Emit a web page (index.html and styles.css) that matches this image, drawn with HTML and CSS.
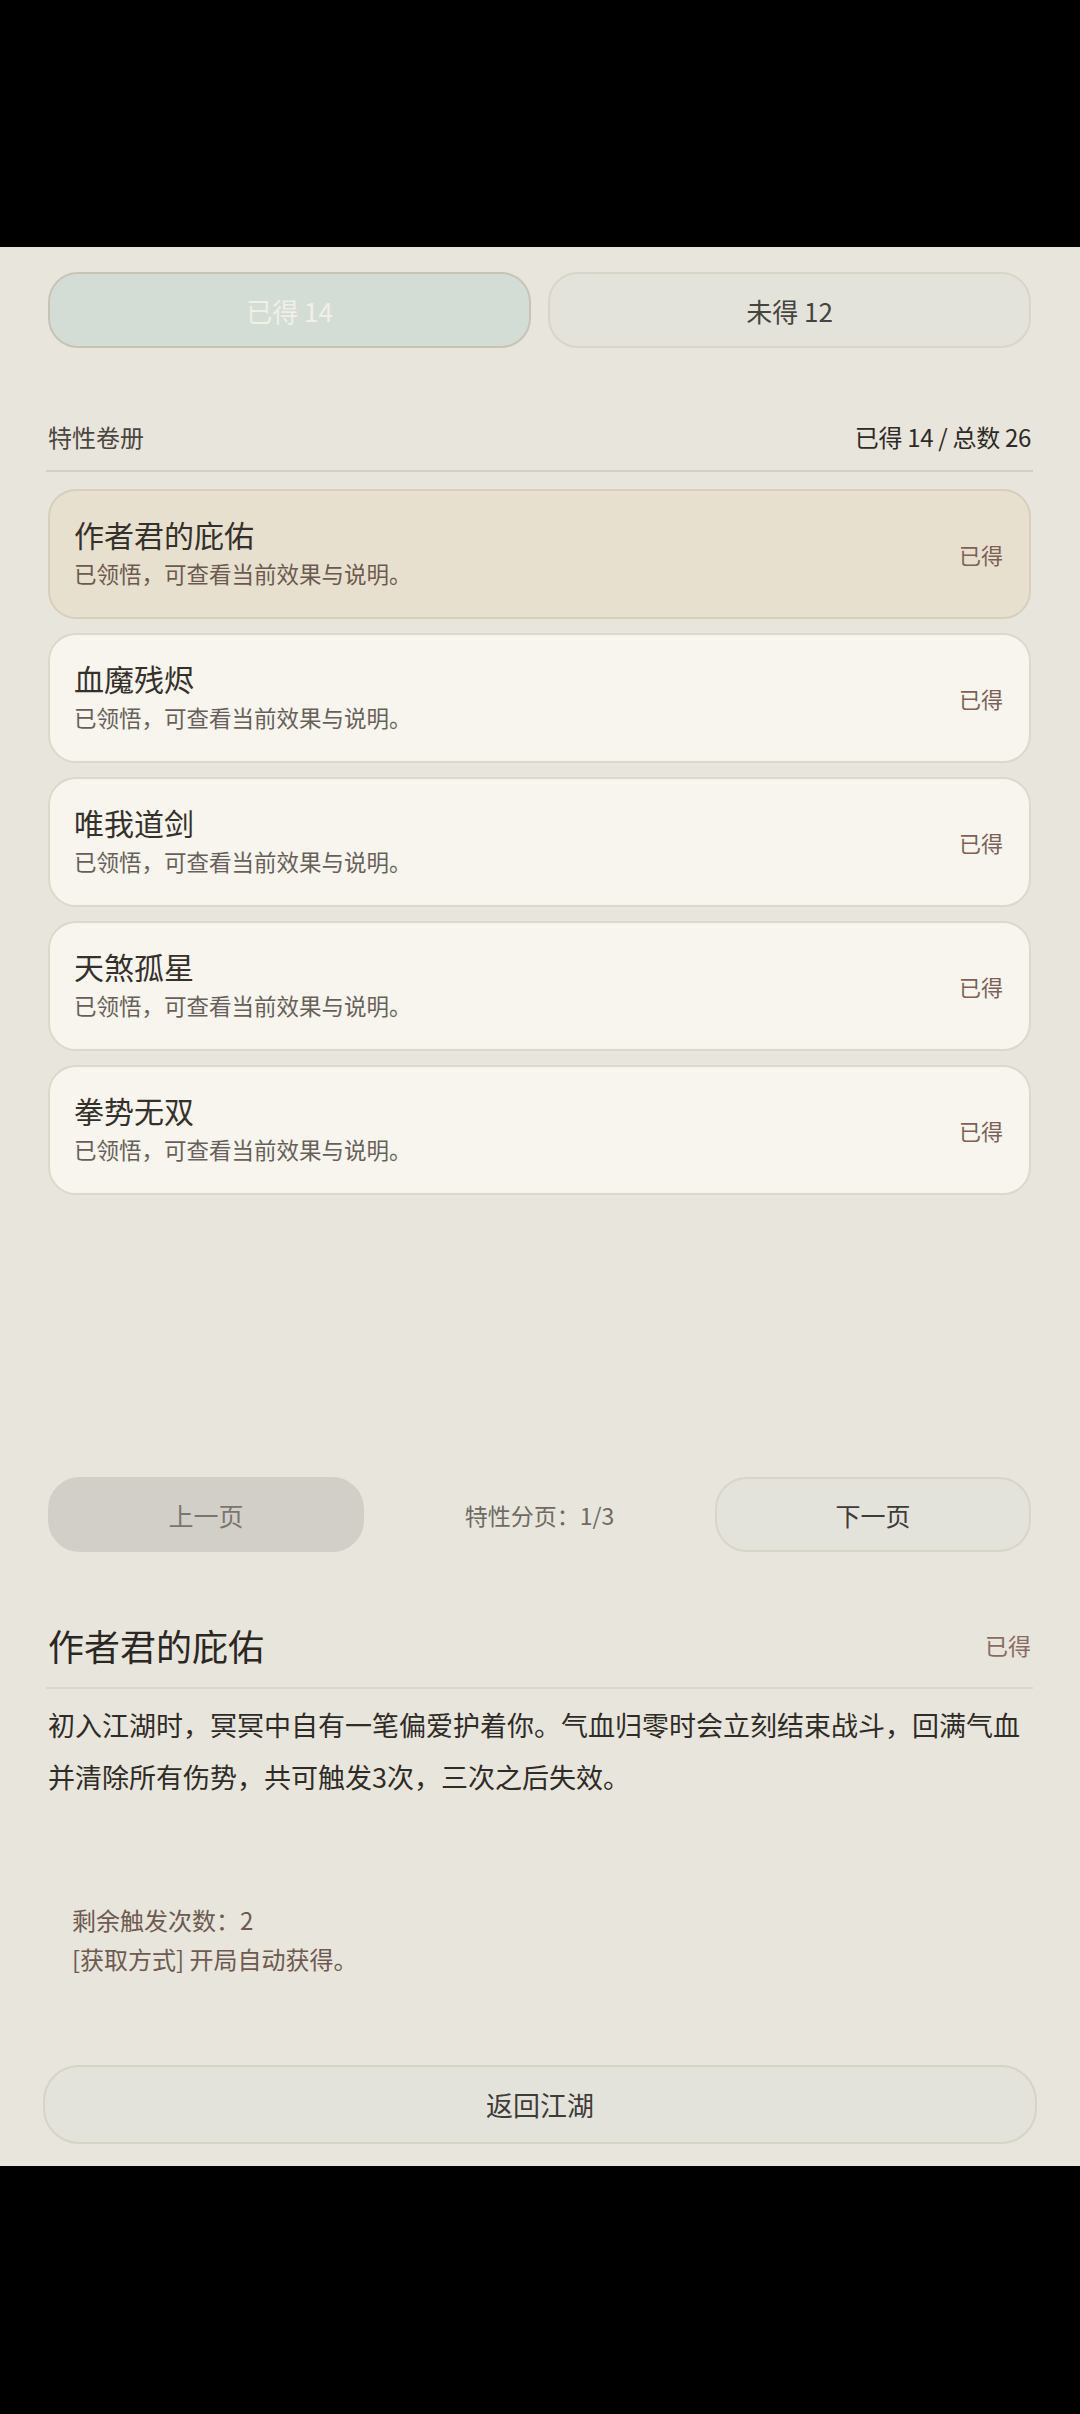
FILE: index.html
```html
<!DOCTYPE html>
<html lang="zh-CN">
<head>
    <meta charset="UTF-8">
    <meta name="viewport" content="width=device-width, initial-scale=1.0">
    <title>特性卷册</title>
    <link rel="stylesheet" href="styles.css">
</head>
<body>
    <div class="status-bar"></div>

    <main class="app">
        <!-- 已得 / 未得 切换 -->
        <div class="tabs">
            <button class="tab tab-active">已得 14</button>
            <button class="tab">未得 12</button>
        </div>

        <div class="section-head">
            <span class="section-title">特性卷册</span>
            <span class="section-count">已得 14 / 总数 26</span>
        </div>

        <!-- 特性列表 -->
        <ul class="trait-list">
            <li class="trait trait-selected">
                <div class="trait-text">
                    <div class="trait-name">作者君的庇佑</div>
                    <div class="trait-desc">已领悟，可查看当前效果与说明。</div>
                </div>
                <span class="trait-state">已得</span>
            </li>
            <li class="trait">
                <div class="trait-text">
                    <div class="trait-name">血魔残烬</div>
                    <div class="trait-desc">已领悟，可查看当前效果与说明。</div>
                </div>
                <span class="trait-state">已得</span>
            </li>
            <li class="trait">
                <div class="trait-text">
                    <div class="trait-name">唯我道剑</div>
                    <div class="trait-desc">已领悟，可查看当前效果与说明。</div>
                </div>
                <span class="trait-state">已得</span>
            </li>
            <li class="trait">
                <div class="trait-text">
                    <div class="trait-name">天煞孤星</div>
                    <div class="trait-desc">已领悟，可查看当前效果与说明。</div>
                </div>
                <span class="trait-state">已得</span>
            </li>
            <li class="trait">
                <div class="trait-text">
                    <div class="trait-name">拳势无双</div>
                    <div class="trait-desc">已领悟，可查看当前效果与说明。</div>
                </div>
                <span class="trait-state">已得</span>
            </li>
        </ul>

        <!-- 分页 -->
        <div class="pager">
            <button class="pager-btn pager-disabled">上一页</button>
            <span class="pager-label">特性分页：1/3</span>
            <button class="pager-btn">下一页</button>
        </div>

        <!-- 详情 -->
        <section class="detail">
            <div class="detail-head">
                <h2 class="detail-title">作者君的庇佑</h2>
                <span class="detail-state">已得</span>
            </div>
            <p class="detail-body">初入江湖时，冥冥中自有一笔偏爱护着你。气血归零时会立刻结束战斗，回满气血并清除所有伤势，共可触发3次，三次之后失效。</p>
            <div class="detail-note">
                <div>剩余触发次数：2</div>
                <div>[获取方式] 开局自动获得。</div>
            </div>
        </section>

        <button class="back-btn">返回江湖</button>
    </main>

    <div class="nav-bar"></div>
</body>
</html>
```

FILE: styles.css
```css
/* 页面基础 */
* {
    box-sizing: border-box;
}
body {
    margin: 0;
    width: 1080px;
    background: #000;
    font-family: "Noto Sans CJK SC", "Noto Sans", sans-serif;
    color: #2f2b27;
}
button {
    font-family: inherit;
    cursor: pointer;
}
.status-bar {
    height: 247px;
    background: #000;
}
.nav-bar {
    height: 248px;
    background: #000;
}

.app {
    height: 1919px;
    overflow: hidden;
    background: #e8e5dc;
    padding: 25px 49px 0 48px;
    display: flex;
    flex-direction: column;
}

/* 切换按钮 */
.tabs {
    display: grid;
    grid-template-columns: 1fr 1fr;
    gap: 17px;
}
.tab {
    height: 76px;
    border-radius: 30px;
    border: 2px solid #d8d5ca;
    background: #e3e3dc;
    color: #47433e;
    font-size: 26px;
}
.tab-active {
    background: #d4ddd5;
    border-color: #c7c4b6;
    color: #f0efe8;
}

/* 列表标题 */
.section-head {
    display: flex;
    justify-content: space-between;
    align-items: center;
    margin: 72px -2px 0;
    padding: 0 2px 16px;
    line-height: 34px;
    font-size: 24px;
    border-bottom: 2px solid #d2cfc4;
}
.section-title {
    color: #4a4540;
}
.section-count {
    color: #2e2a26;
    letter-spacing: -0.3px;
}

/* 特性卡片 */
.trait-list {
    list-style: none;
    margin: 17px 0 0;
    padding: 0;
    display: flex;
    flex-direction: column;
    gap: 14px;
}
.trait {
    height: 130px;
    display: flex;
    align-items: center;
    justify-content: space-between;
    padding: 0 26px 0 24px;
    border: 2px solid #dcd8cd;
    border-radius: 28px;
    background: #f8f5ee;
}
.trait-selected {
    background: #e8e0cf;
    border-color: #d6cfbd;
}
.trait-text {
    margin-bottom: 7px;
}
.trait-name {
    font-size: 30px;
    line-height: 40px;
    color: #35302b;
}
.trait-desc {
    margin-top: 4px;
    font-size: 22.5px;
    line-height: 30px;
    color: #67605a;
}
.trait-selected .trait-desc {
    color: #6c5a50;
}
.trait-state {
    font-size: 22px;
    color: #7d6157;
}

/* 分页 */
.pager {
    margin-top: 282px;
    display: flex;
    align-items: center;
    justify-content: space-between;
}
.pager-btn {
    width: 316px;
    height: 75px;
    border-radius: 32px;
    border: 2px solid #d8d5ca;
    background: #e3e3dc;
    color: #3f3b36;
    font-size: 25px;
}
.pager-disabled {
    background: #d2cfc8;
    border-color: #d2cfc8;
    color: #7a756e;
}
.pager-label {
    font-size: 23px;
    color: #6f6a64;
}

/* 详情 */
.detail {
    margin-top: 69px;
}
.detail-head {
    display: flex;
    justify-content: space-between;
    align-items: center;
    margin: 0 -2px;
    padding: 0 2px 18px;
    border-bottom: 2px solid #dad7cd;
}
.detail-title {
    margin: 0;
    font-size: 36px;
    line-height: 48px;
    font-weight: normal;
    color: #2b2723;
}
.detail-state {
    font-size: 23px;
    color: #8a6b61;
}
.detail-body {
    margin: 10px 0 0;
    font-size: 27px;
    line-height: 52px;
    color: #2f2b27;
}
.detail-note {
    margin-top: 97px;
    padding-left: 24px;
    font-size: 24px;
    line-height: 39px;
    color: #6e5a50;
}

/* 返回按钮 */
.back-btn {
    margin: auto -6px 22px -5px;
    height: 79px;
    border-radius: 36px;
    border: 2px solid #d6d3c8;
    background: #e3e3dc;
    color: #3f3b36;
    font-size: 27px;
}
```
